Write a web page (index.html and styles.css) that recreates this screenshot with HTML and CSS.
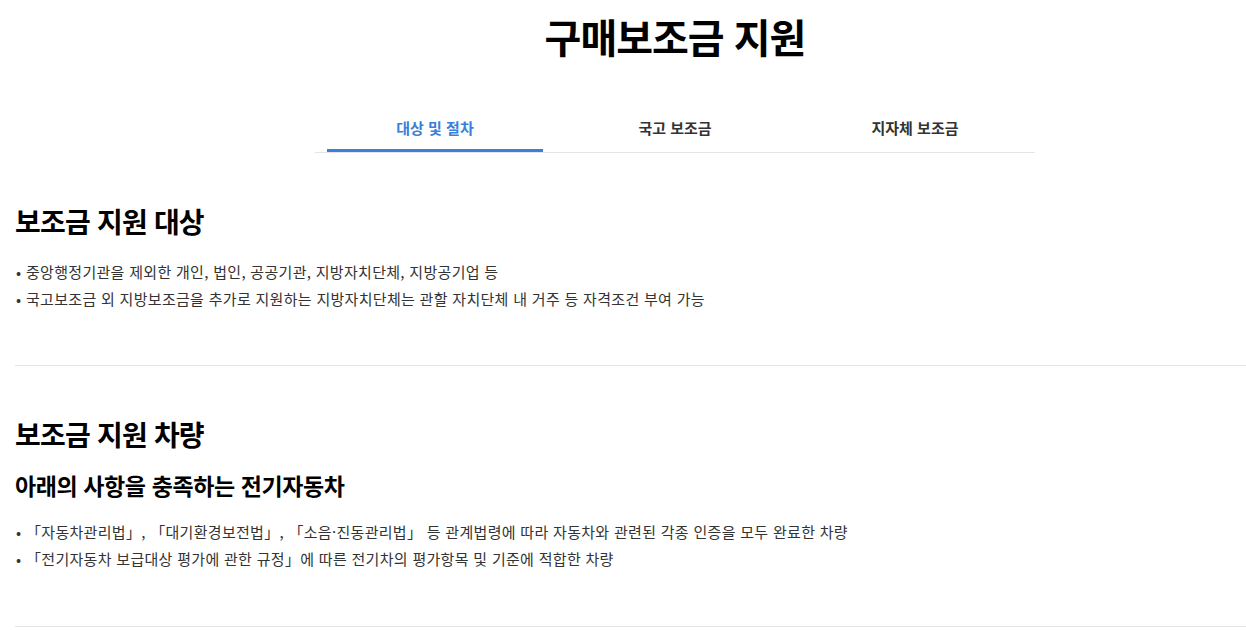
FILE: index.html
```html
<!DOCTYPE html>
<html lang="ko">
    <head>
        <meta charset="utf-8" />
        <meta name="viewport" content="width=device-width" />
        <title>구매보조금 지원</title>
        <link rel="stylesheet" href="styles.css">
    </head>
    <body>
        <div class="page">
            <div class="top">
                <h1 class="page-title">구매보조금 지원</h1>

                <ul class="tabs">
                    <li class="tab active">대상 및 절차</li>
                    <li class="tab">국고 보조금</li>
                    <li class="tab">지자체 보조금</li>
                </ul>
            </div>

            <section class="block">
                <h2 class="block-title">보조금 지원 대상</h2>
                <ul class="dots">
                    <li>중앙행정기관을 제외한 개인, 법인, 공공기관, 지방자치단체, 지방공기업 등</li>
                    <li>국고보조금 외 지방보조금을 추가로 지원하는 지방자치단체는 관할 자치단체 내 거주 등 자격조건 부여 가능</li>
                </ul>
            </section>

            <section class="block last">
                <h2 class="block-title">보조금 지원 차량</h2>
                <h3 class="block-sub">아래의 사항을 충족하는 전기자동차</h3>
                <ul class="dots">
                    <li>「자동차관리법」, 「대기환경보전법」, 「소음·진동관리법」 등 관계법령에 따라 자동차와 관련된 각종 인증을 모두 완료한 차량</li>
                    <li>「전기자동차 보급대상 평가에 관한 규정」에 따른 전기차의 평가항목 및 기준에 적합한 차량</li>
                </ul>
            </section>
        </div>
    </body>
</html>
```

FILE: styles.css
```css
html, body { margin: 0; padding: 0; overflow: hidden; background: #fff }
body {
    font-family: "Noto Sans CJK KR", "Noto Sans", sans-serif;
    color: #333;
}

.page {
    padding-left: 15px;
}

/* title + tabs sit a bit right of the window centre */
.top {
    padding-left: 89px;
}

.page-title {
    margin: 0;
    padding-top: 10px;
    font-size: 40px;
    line-height: 52px;
    font-weight: 700;
    color: #000;
    text-align: center;
    letter-spacing: -1px;
}

/* tab bar */
.tabs {
    display: flex;
    width: 720px;
    margin: 46px auto 0;
    padding: 0;
    list-style: none;
    border-bottom: 1px solid #e5e5e5;
}
.tab {
    flex: 1;
    margin: 0 12px;
    padding: 9px 0 10px;
    font-size: 15px;
    line-height: 22px;
    font-weight: 700;
    color: #333;
    text-align: center;
    border-bottom: 3px solid transparent;
}
.tab.active {
    color: #3a80d9;
    border-bottom-color: #3a80d9;
}

/* content blocks */
.block {
    padding: 48px 0 53px;
    border-bottom: 1px solid #e5e5e5;
}
.block.last {
    padding-top: 48px;
    padding-bottom: 54px;
}

.block-title {
    margin: 0;
    font-size: 28px;
    line-height: 40px;
    font-weight: 700;
    color: #000;
    letter-spacing: -0.8px;
}
.block-sub {
    margin: 15px 0 0;
    font-size: 23px;
    line-height: 32px;
    font-weight: 700;
    color: #000;
    letter-spacing: -0.4px;
}

.dots {
    margin: 17px 0 0;
    padding: 0;
    list-style: none;
    text-spacing-trim: space-all;
}
.dots li {
    position: relative;
    padding-left: 11px;
    font-size: 15px;
    line-height: 27px;
    letter-spacing: 0.3px;
}
.dots li:before {
    content: "•";
    position: absolute;
    left: 1px;
    top: 0;
}
```
